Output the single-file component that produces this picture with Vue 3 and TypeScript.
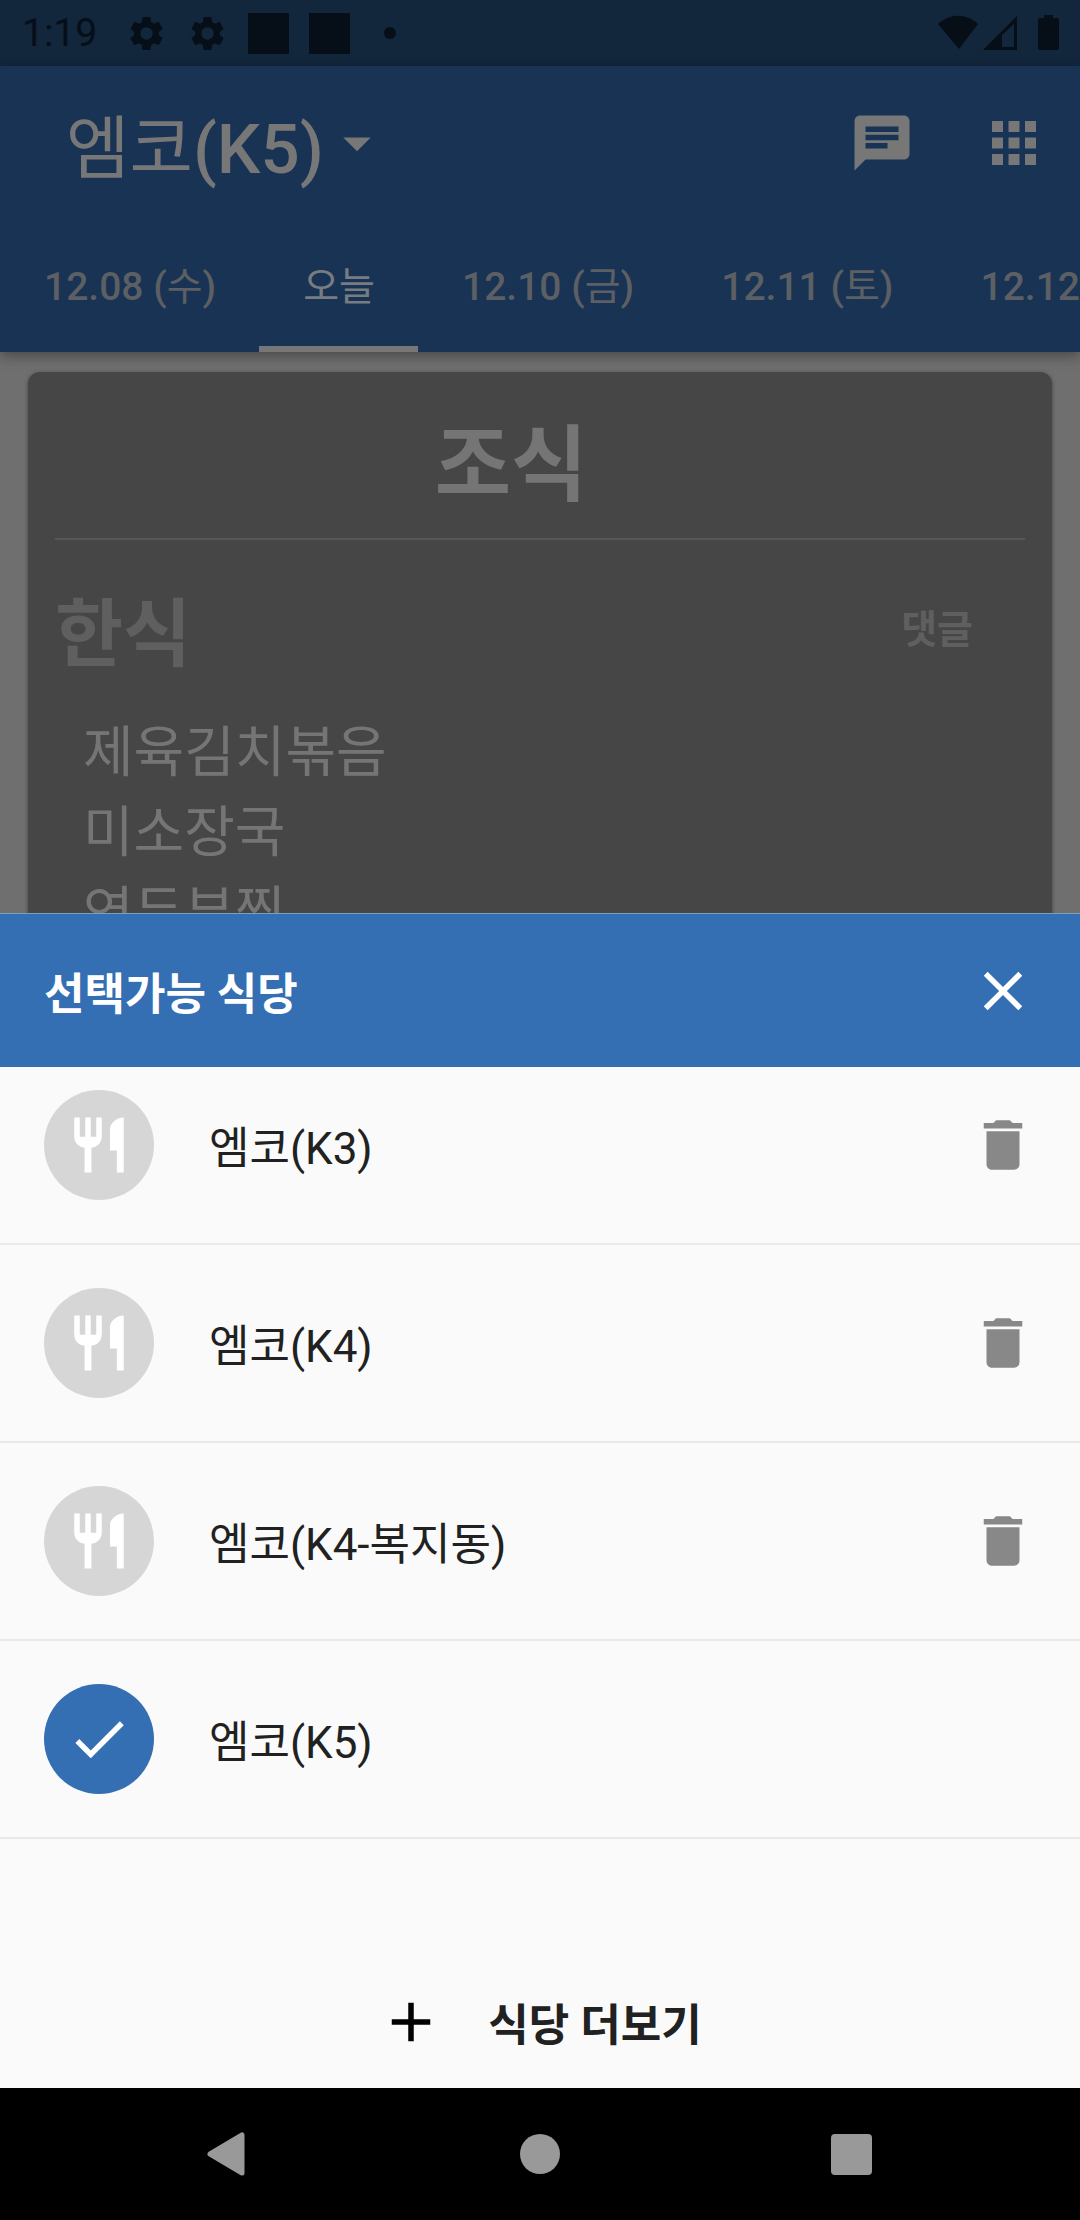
<script setup lang="ts">
import { ref } from 'vue'

interface Restaurant {
  id: string
  name: string
}

interface Run {
  text: string
  hangul: boolean
}

const days = ['12.08 (수)', '오늘', '12.10 (금)', '12.11 (토)', '12.12 (일)']
const activeDay = ref('오늘')

const menu = ['제육김치볶음', '미소장국', '연두부찜']

const restaurants = ref<Restaurant[]>([
  { id: 'k3', name: '엠코(K3)' },
  { id: 'k4', name: '엠코(K4)' },
  { id: 'k4-annex', name: '엠코(K4-복지동)' },
  { id: 'k5', name: '엠코(K5)' },
])
const selected = ref('k5')

function remove(id: string) {
  restaurants.value = restaurants.value.filter((r) => r.id !== id)
}

// Hangul keeps the regular weight beside medium Latin letters and digits.
function runs(text: string): Run[] {
  return (text.match(/[가-힣]+|[^가-힣]+/g) ?? []).map((part) => ({
    text: part,
    hangul: /[가-힣]/.test(part),
  }))
}
</script>

<template>
  <div class="screen">
    <div class="status">
      <span class="clock">1:19</span>
      <div class="notices">
        <svg v-for="n in 2" :key="n" class="gear" viewBox="0 0 24 24" aria-hidden="true">
          <path d="M19.14 12.94c.04-.3.06-.61.06-.94 0-.32-.02-.64-.07-.94l2.03-1.58c.18-.14.23-.41.12-.61l-1.92-3.32c-.12-.22-.37-.29-.59-.22l-2.39.96c-.5-.38-1.03-.7-1.62-.94l-.36-2.54c-.04-.24-.24-.41-.48-.41h-3.84c-.24 0-.43.17-.47.41l-.36 2.54c-.59.24-1.13.57-1.62.94l-2.39-.96c-.22-.08-.47 0-.59.22L2.74 8.87c-.12.21-.08.47.12.61l2.03 1.58c-.05.3-.09.63-.09.94s.02.64.07.94l-2.03 1.58c-.18.14-.23.41-.12.61l1.92 3.32c.12.22.37.29.59.22l2.39-.96c.5.38 1.03.7 1.62.94l.36 2.54c.05.24.24.41.48.41h3.84c.24 0 .44-.17.47-.41l.36-2.54c.59-.24 1.13-.56 1.62-.94l2.39.96c.22.08.47 0 .59-.22l1.92-3.32c.12-.22.07-.47-.12-.61l-2.01-1.58zM12 15.6c-1.98 0-3.6-1.62-3.6-3.6s1.62-3.6 3.6-3.6 3.6 1.62 3.6 3.6-1.62 3.6-3.6 3.6z" />
        </svg>
        <span class="block"></span>
        <span class="block"></span>
        <span class="dot"></span>
      </div>
      <svg class="system" viewBox="0 0 122 36" aria-hidden="true">
        <path d="M0 9C12-2 28-2 40 9L21 34Z" />
        <path fill-rule="evenodd" d="M45 35L79 1V35ZM64 32H76V9L64 20Z" />
        <path d="M106 0h9v3h4q2 0 2 2v28q0 2-2 2h-17q-2 0-2-2V5q0-2 2-2h4z" />
      </svg>
    </div>

    <header class="appbar">
      <div class="toolbar">
        <button class="place" type="button">
          <span><span v-for="(run, i) in runs('엠코(K5)')" :key="i" :class="{ hangul: run.hangul }">{{ run.text }}</span></span>
          <svg class="icon" viewBox="0 0 24 24" aria-hidden="true"><path d="M7 10l5 5 5-5z" /></svg>
        </button>
        <button class="action" type="button" aria-label="댓글">
          <svg class="icon" viewBox="0 0 24 24" aria-hidden="true">
            <path d="M20 2H4c-1.100 0-1.990.9-1.990 2L2 22l4-4h14c1.100 0 2-.9 2-2V4c0-1.100-.9-2-2-2zM6 9h12v2H6V9zm8 5H6v-2h8v2zm4-6H6V6h12v2z" />
          </svg>
        </button>
        <button class="action" type="button" aria-label="전체 메뉴">
          <svg class="icon" viewBox="0 0 24 24" aria-hidden="true">
            <path d="M4 8h4V4H4v4zm6 12h4v-4h-4v4zm-6 0h4v-4H4v4zm0-6h4v-4H4v4zm6 0h4v-4h-4v4zm6-10v4h4V4h-4zm-6 4h4V4h-4v4zm6 6h4v-4h-4v4zm0 6h4v-4h-4v4z" />
          </svg>
        </button>
      </div>
      <nav class="tabs">
        <button
          v-for="day in days"
          :key="day"
          type="button"
          class="tab"
          :class="{ active: day === activeDay }"
          @click="activeDay = day"
        >
          <span v-for="(run, i) in runs(day)" :key="i" :class="{ hangul: run.hangul }">{{ run.text }}</span>
        </button>
      </nav>
    </header>

    <main class="content">
      <article class="card">
        <h1 class="meal">조식</h1>
        <div class="course">
          <h2>한식</h2>
          <button class="comment" type="button">댓글</button>
        </div>
        <ul class="menu">
          <li v-for="dish in menu" :key="dish">{{ dish }}</li>
        </ul>
      </article>
    </main>

    <section class="sheet">
      <div class="sheet-head">
        <h2>선택가능 식당</h2>
        <button class="plain" type="button" aria-label="닫기">
          <svg class="icon" viewBox="0 0 24 24" aria-hidden="true">
            <path d="M19 6.410L17.590 5 12 10.590 6.410 5 5 6.410 10.590 12 5 17.590 6.410 19 12 13.410 17.590 19 19 17.590 13.410 12z" />
          </svg>
        </button>
      </div>
      <ul class="list">
        <li v-for="r in restaurants" :key="r.id" class="row">
          <button class="choose" type="button" @click="selected = r.id">
            <span class="avatar" :class="{ on: r.id === selected }">
              <svg class="icon" viewBox="0 0 24 24" aria-hidden="true">
                <path v-if="r.id === selected" d="M9 16.170L4.830 12l-1.420 1.410L9 19 21 7l-1.410-1.410z" />
                <path v-else d="M11 9H9V2H7v7H5V2H3v7c0 2.120 1.660 3.840 3.750 3.970V22h2.500v-9.030C11.340 12.840 13 11.120 13 9V2h-2v7zm5-3v8h2.500v8H21V2c-2.760 0-5 2.240-5 4z" />
              </svg>
            </span>
            <span>{{ r.name }}</span>
          </button>
          <button v-if="r.id !== selected" class="plain trash" type="button" aria-label="삭제" @click="remove(r.id)">
            <svg class="icon" viewBox="0 0 24 24" aria-hidden="true">
              <path d="M6 19c0 1.100.9 2 2 2h8c1.100 0 2-.9 2-2V7H6v12zM19 4h-3.500l-1-1h-5l-1 1H5v2h14V4z" />
            </svg>
          </button>
        </li>
      </ul>
      <button class="more" type="button">
        <svg class="icon" viewBox="0 0 24 24" aria-hidden="true"><path d="M19 13h-6v6h-2v-6H5v-2h6V5h2v6h6v2z" /></svg>
        <span>식당 더보기</span>
      </button>
    </section>

    <nav class="navbar">
      <button class="key" type="button" aria-label="뒤로">
        <svg class="glyph" viewBox="0 0 46 46" aria-hidden="true"><path d="M6 23L38 4V42Z" stroke-width="5" stroke-linejoin="round" /></svg>
      </button>
      <button class="key" type="button" aria-label="홈">
        <svg class="glyph" viewBox="0 0 46 46" aria-hidden="true"><circle cx="23" cy="23" r="20" stroke="none" /></svg>
      </button>
      <button class="key" type="button" aria-label="최근 앱">
        <svg class="glyph" viewBox="0 0 46 46" aria-hidden="true"><rect x="1" y="3" width="41" height="41" rx="4" stroke="none" /></svg>
      </button>
    </nav>
  </div>
</template>

<style>
body {
  margin: 0;
  background: #000;
}
</style>

<style scoped>
.screen {
  display: flex;
  flex-direction: column;
  height: 100vh;
  overflow: hidden;
  background: #6f6f6f;
  font-family: Roboto, "Noto Sans CJK KR", sans-serif;
}

h1,
h2,
ul {
  margin: 0;
  padding: 0;
  list-style: none;
}

button {
  margin: 0;
  padding: 0;
  border: 0;
  background: none;
  color: inherit;
  font: inherit;
}

.icon {
  display: block;
  flex: none;
  width: 66px;
  height: 66px;
  fill: currentColor;
}

.hangul {
  font-weight: 400;
}

/* Status bar */
.status {
  display: flex;
  flex: none;
  align-items: center;
  height: 66px;
  padding: 0 20px 0 22px;
  background: #12263c;
  color: #060f18;
}

.clock {
  font-size: 39px;
  line-height: 66px;
}

.notices {
  display: flex;
  flex: 1;
  align-items: center;
  gap: 20px;
  padding-left: 29px;
}

.gear {
  width: 41px;
  height: 41px;
  fill: currentColor;
}

.block {
  width: 41px;
  height: 41px;
  background: currentColor;
}

.dot {
  width: 12px;
  height: 12px;
  margin-left: 14px;
  border-radius: 50%;
  background: currentColor;
}

.system {
  width: 122px;
  height: 36px;
  fill: currentColor;
}

/* App bar */
.appbar {
  position: relative;
  z-index: 1;
  flex: none;
  background: #193354;
  box-shadow: 0 4px 12px rgba(0, 0, 0, 0.35);
  color: #777;
}

.toolbar {
  display: flex;
  align-items: center;
  height: 154px;
  padding-left: 66px;
}

.place {
  display: flex;
  align-items: center;
  margin-right: auto;
  font-size: 69px;
  font-weight: 500;
}

.action {
  display: flex;
  align-items: center;
  justify-content: center;
  width: 132px;
  height: 132px;
}

.tabs {
  display: flex;
  overflow: hidden;
}

.tab {
  flex: none;
  height: 132px;
  padding: 0 43px 0 44px;
  border-bottom: 6px solid transparent;
  color: #5c5f63;
  font-size: 39px;
  font-weight: 500;
  white-space: pre;
}

.tab.active {
  border-color: #777;
  color: #777c82;
}

/* Meal card */
.content {
  flex: 1 1 0;
  min-height: 0;
  padding: 20px 28px 0;
  overflow: hidden;
}

.card {
  padding: 0 27px;
  border-radius: 12px;
  background: #464646;
  box-shadow: 0 1px 4px rgba(0, 0, 0, 0.4);
  color: #757575;
}

.meal {
  padding: 43px 58px 21px 0;
  border-bottom: 2px solid #575757;
  font-size: 83px;
  font-weight: 700;
  line-height: 102px;
  text-align: center;
}

.course {
  display: flex;
  align-items: flex-start;
  justify-content: space-between;
  padding: 40px 52px 22px 0;
  color: #5f5f5f;
}

.course h2 {
  font-size: 74px;
  font-weight: 700;
  line-height: 110px;
}

.comment {
  height: 92px;
  font-size: 39px;
  font-weight: 700;
}

.menu {
  padding-left: 28px;
  font-size: 55px;
  line-height: 80px;
}

/* Restaurant sheet */
.sheet {
  flex: none;
  background: #fafafa;
  color: #212121;
}

.sheet-head {
  position: relative;
  z-index: 1;
  display: flex;
  align-items: center;
  justify-content: space-between;
  height: 153px;
  padding: 0 44px;
  border-top: 1px solid #7f9fc0;
  background: #346eb3;
  color: #fff;
}

.sheet-head h2 {
  font-size: 44px;
  font-weight: 700;
}

.plain {
  flex: none;
}

/* The list is scrolled a little way under its header. */
.list {
  margin-top: -20px;
}

.row {
  display: flex;
  align-items: center;
  height: 196px;
  padding: 0 44px;
  border-bottom: 2px solid #e9e9e9;
}

.choose {
  display: flex;
  flex: 1;
  align-items: center;
  gap: 55px;
  font-size: 44px;
  text-align: left;
}

.avatar {
  display: flex;
  align-items: center;
  justify-content: center;
  width: 110px;
  height: 110px;
  border-radius: 50%;
  background: #d6d6d6;
  color: #fff;
}

.avatar.on {
  background: #346eb3;
}

.trash {
  color: #888;
}

.more {
  display: flex;
  align-items: center;
  justify-content: center;
  gap: 44px;
  width: 100%;
  height: 132px;
  margin-top: 117px;
  font-size: 44px;
  font-weight: 700;
}

.more .icon {
  color: #000;
}

/* System navigation */
.navbar {
  display: flex;
  flex: none;
  justify-content: center;
  height: 132px;
  background: #000;
}

.key {
  display: flex;
  align-items: center;
  justify-content: center;
  width: 29%;
}

.glyph {
  width: 46px;
  height: 46px;
  fill: #999;
  stroke: #999;
}
</style>
